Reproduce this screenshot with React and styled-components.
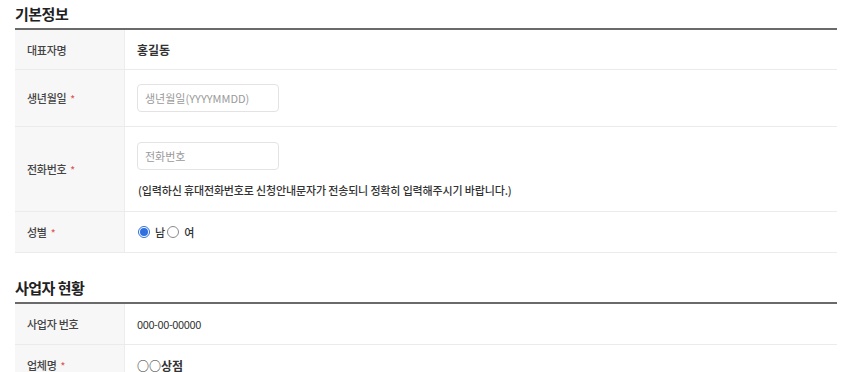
import React from "react";
import styled, { createGlobalStyle } from "styled-components";

const GlobalStyle = createGlobalStyle`
	body {
		margin: 0;
		background: #ffffff;
		font-family: "Noto Sans CJK KR", "Noto Sans", sans-serif;
		color: #333;
	}
`;

const Page = styled.div`
	width: 822px;
	padding: 4px 0 0 15px;
`;

const Section = styled.section`
	margin-top: ${(p) => (p.first ? "0" : "25px")};
`;

const Title = styled.h3`
	margin: 0 0 4px;
	font-size: 15px;
	line-height: 20px;
	font-weight: 700;
	color: #222;
	letter-spacing: -0.5px;
`;

const Table = styled.div`
	border-top: 2px solid #6a6a6a;
`;

const Row = styled.div`
	display: grid;
	grid-template-columns: 110px 1fr;
	min-height: ${(p) => p.h || 39}px;
	border-bottom: 1px solid #ebebeb;
`;

const Label = styled.div`
	display: flex;
	align-items: center;
	padding: 0 12px;
	background: #f7f7f7;
	border-right: 1px solid #ededed;
	font-size: 11px;
	font-weight: 500;
	color: #444;
	letter-spacing: -0.3px;
`;

const Star = styled.span`
	color: #e05a5a;
	margin-left: 4px;
	font-size: 10px;
`;

const Value = styled.div`
	display: flex;
	flex-direction: ${(p) => (p.column ? "column" : "row")};
	justify-content: ${(p) => (p.column ? "center" : "flex-start")};
	align-items: ${(p) => (p.column ? "flex-start" : "center")};
	gap: ${(p) => (p.column ? "13px" : "0")};
	padding: ${(p) => (p.column ? "14px 12px" : "0 12px")};
	font-size: ${(p) => (p.small ? "11px" : "12px")};
	font-weight: ${(p) => (p.bold ? 600 : 400)};
	letter-spacing: ${(p) => (p.small ? "-0.4px" : "0")};
	color: #333;
`;

const TextInput = styled.input`
	box-sizing: border-box;
	width: 142px;
	height: 28px;
	padding: 0 7px;
	border: 1px solid #e3e3e3;
	border-radius: 4px;
	font-family: inherit;
	font-size: 11px;
	color: #333;
	outline: none;
	&::placeholder {
		color: #9a9a9a;
	}
`;

const Hint = styled.p`
	margin: 0 0 0 1px;
	font-size: 11px;
	line-height: 14px;
	font-weight: 500;
	color: #333;
	letter-spacing: -0.15px;
`;

const RadioGroup = styled.div`
	display: flex;
	align-items: center;
	padding-left: 1px;
	font-size: 11px;
	font-weight: 500;
	color: #333;
`;

const RadioLabel = styled.label`
	display: flex;
	align-items: center;
	gap: 5px;
	margin-right: ${(p) => (p.tight ? "2px" : "0")};
`;

const Radio = styled.span`
	box-sizing: border-box;
	width: 12px;
	height: 12px;
	border-radius: 50%;
	border: 1px solid ${(p) => (p.checked ? "#2f6fe0" : "#8a8a8a")};
	background: #fff;
	display: flex;
	align-items: center;
	justify-content: center;
	&::after {
		content: "";
		width: 8px;
		height: 8px;
		border-radius: 50%;
		background: ${(p) => (p.checked ? "#2f6fe0" : "transparent")};
	}
`;

export default function App() {
	return (
		<Page>
			<GlobalStyle />
			<Section first>
				<Title>기본정보</Title>
				<Table>
					<Row h={39}>
						<Label>대표자명</Label>
						<Value bold>홍길동</Value>
					</Row>
					<Row h={56}>
						<Label>
							생년월일<Star>*</Star>
						</Label>
						<Value>
							<TextInput placeholder="생년월일(YYYYMMDD)" />
						</Value>
					</Row>
					<Row h={84}>
						<Label>
							전화번호<Star>*</Star>
						</Label>
						<Value column>
							<TextInput placeholder="전화번호" />
							<Hint>
								(입력하신 휴대전화번호로 신청안내문자가 전송되니
								정확히 입력해주시기 바랍니다.)
							</Hint>
						</Value>
					</Row>
					<Row h={40}>
						<Label>
							성별<Star>*</Star>
						</Label>
						<Value>
							<RadioGroup>
								<RadioLabel tight>
									<Radio checked />남
								</RadioLabel>
								<RadioLabel>
									<Radio /> 여
								</RadioLabel>
							</RadioGroup>
						</Value>
					</Row>
				</Table>
			</Section>
			<Section>
				<Title>사업자 현황</Title>
				<Table>
					<Row h={40}>
						<Label>사업자 번호</Label>
						<Value small>000-00-00000</Value>
					</Row>
					<Row h={40}>
						<Label>
							업체명<Star>*</Star>
						</Label>
						<Value bold>○○상점</Value>
					</Row>
				</Table>
			</Section>
		</Page>
	);
}
